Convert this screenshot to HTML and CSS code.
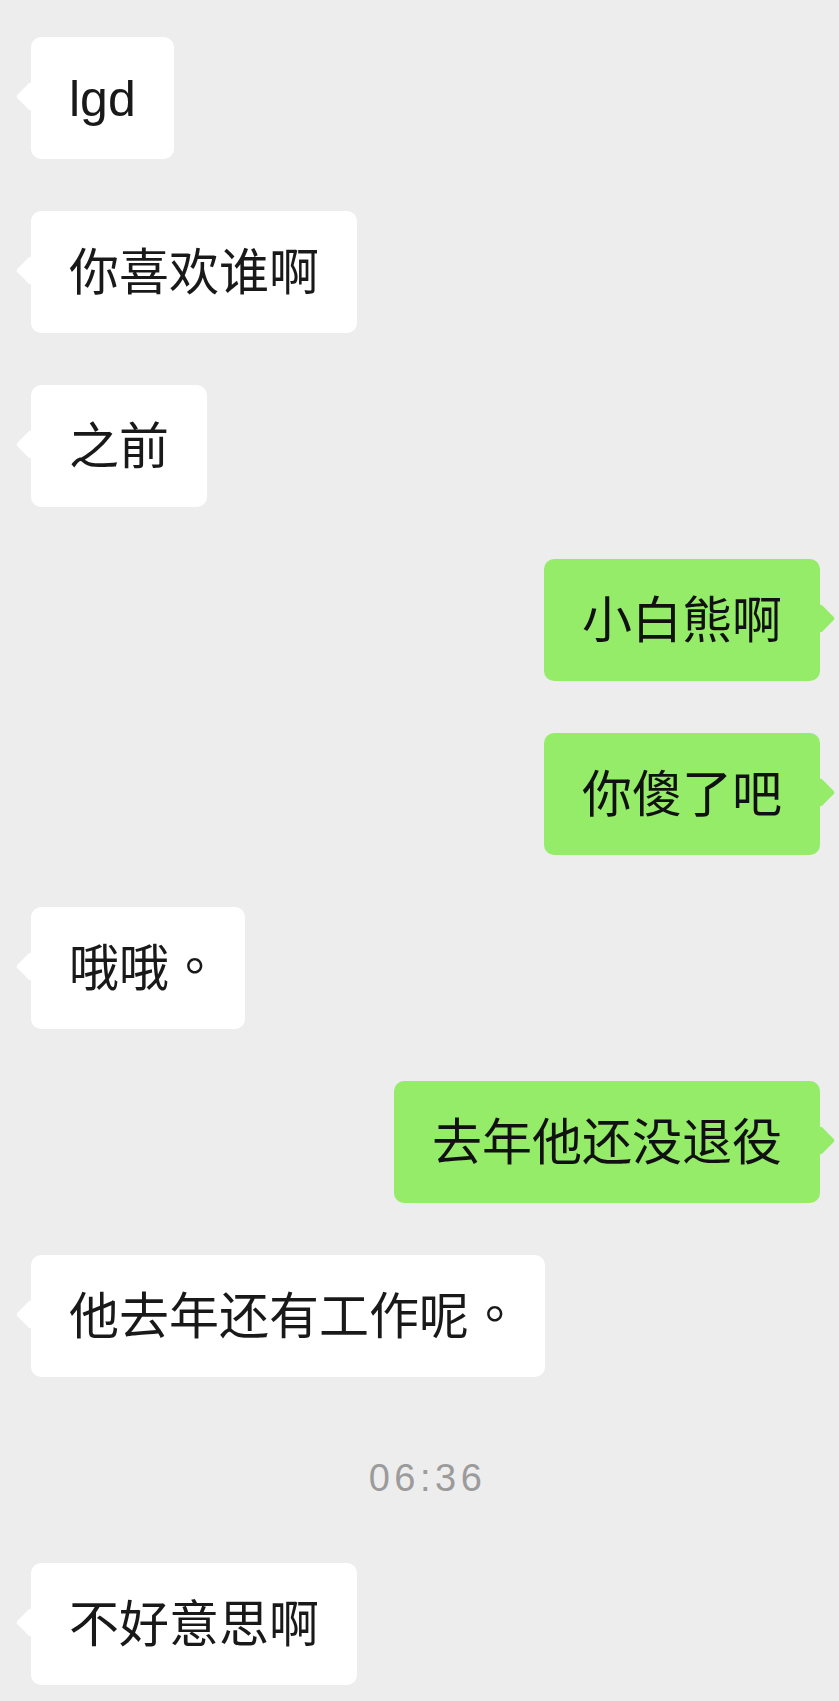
FILE: index.html
```html
<!DOCTYPE html>
<html lang="zh-CN">
<head>
  <meta charset="UTF-8" />
  <meta name="viewport" content="width=device-width, initial-scale=1.0"/>
  <title>聊天</title>
  <link rel="stylesheet" href="styles.css">
</head>
<body>
  <div class="chat">
    <div class="row them"><div class="bubble">lgd</div></div>
    <div class="row them"><div class="bubble">你喜欢谁啊</div></div>
    <div class="row them"><div class="bubble">之前</div></div>
    <div class="row me"><div class="bubble">小白熊啊</div></div>
    <div class="row me"><div class="bubble">你傻了吧</div></div>
    <div class="row them"><div class="bubble">哦哦<span class="dot">。</span></div></div>
    <div class="row me"><div class="bubble">去年他还没退役</div></div>
    <div class="row them"><div class="bubble">他去年还有工作呢<span class="dot">。</span></div></div>
    <div class="time">06:36</div>
    <div class="row them"><div class="bubble">不好意思啊</div></div>
  </div>
</body>
</html>
```

FILE: styles.css
```css
body {
  margin: 0;
  background-color: #ededed;
  font-family: "Liberation Sans", "Noto Sans CJK SC", sans-serif;
}
.chat {
  display: flex;
  flex-direction: column;
  gap: 52px;
  padding: 37px 19px 0 31px;
}
.row {
  display: flex;
}
.row.me {
  justify-content: flex-end;
}
.bubble {
  position: relative;
  background: #fff;
  color: #191919;
  font-size: 50px;
  line-height: 70px;
  padding: 27px 38px 25px;
  border-radius: 10px;
  white-space: nowrap;
}
.me .bubble {
  background: #95ec69;
  color: #111;
}
/* little arrow on the side of each bubble */
.bubble::before {
  content: "";
  position: absolute;
  top: 49px;
  left: -11px;
  width: 21px;
  height: 21px;
  background: inherit;
  border-radius: 3px;
  transform: rotate(45deg);
}
.me .bubble::before {
  left: auto;
  right: -11px;
}
/* centred full stop, as on the phone */
.dot {
  display: inline-block;
  transform: translate(16px, -16px);
  margin-right: -12px;
}
.time {
  text-align: center;
  color: #9b9b9b;
  font-size: 38px;
  line-height: 50px;
  letter-spacing: 4.5px;
  padding: 24px 0 8px 4px;
}
```
